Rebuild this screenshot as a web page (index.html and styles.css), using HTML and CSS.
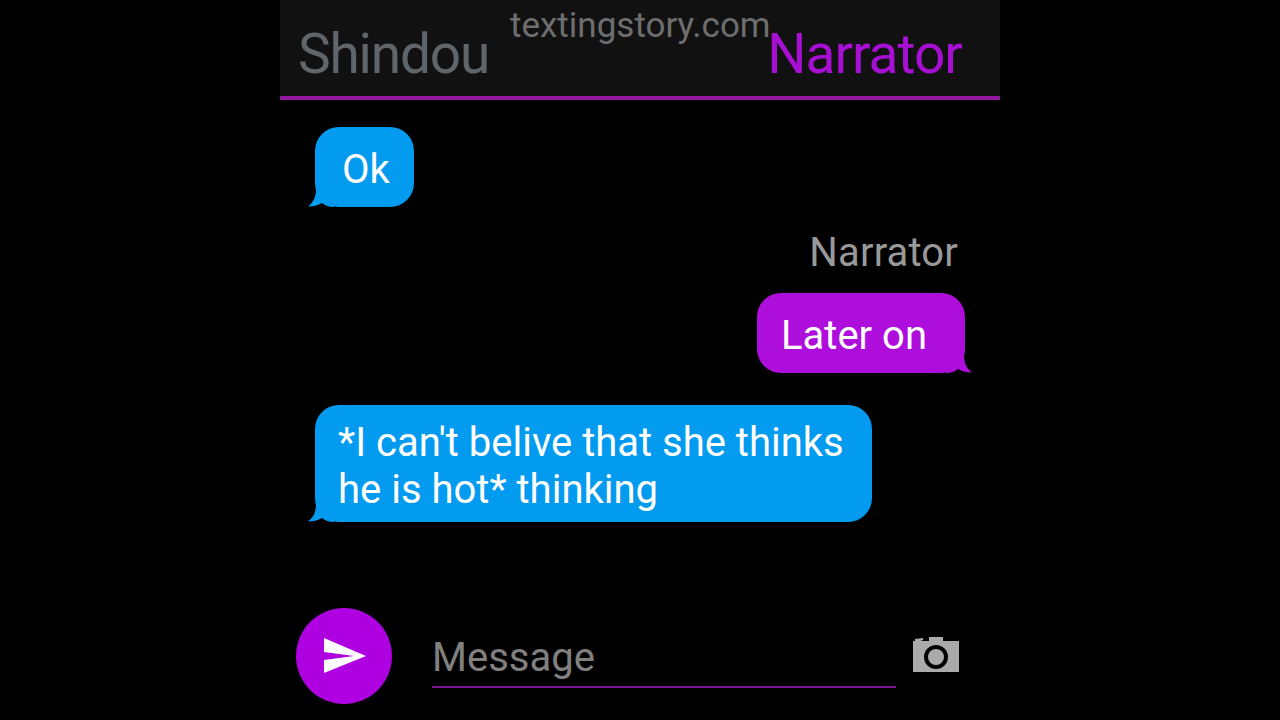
FILE: index.html
```html
<!DOCTYPE html>
<html lang="en">
<head>
    <meta charset="UTF-8">
    <meta name="viewport" content="width=device-width, initial-scale=1.0">
    <title>textingstory.com</title>
    <link rel="stylesheet" href="styles.css">
</head>
<body>
  <div class="phone">
    <div class="header">
      <span class="name-left">Shindou</span>
      <span class="name-right">Narrator</span>
      <span class="watermark">textingstory.com</span>
    </div>

    <div class="messages">
      <div class="bubble blue ok">
        Ok
        <svg class="tail tail-left" width="26" height="18" viewBox="0 0 26 18"><path d="M8 0 C8 7 6 13 0 17.500 C5 17.500 10 16.500 14 14 C17 16.500 21 18 26 18 L26 0 Z"/></svg>
      </div>

      <div class="sender">Narrator</div>
      <div class="bubble purple later">
        Later on
        <svg class="tail tail-right" width="26" height="18" viewBox="0 0 26 18"><path d="M8 0 C8 7 6 13 0 17.500 C5 17.500 10 16.500 14 14 C17 16.500 21 18 26 18 L26 0 Z"/></svg>
      </div>

      <div class="bubble blue long">
        *I can't belive that she thinks<br>he is hot* thinking
        <svg class="tail tail-left" width="26" height="18" viewBox="0 0 26 18"><path d="M8 0 C8 7 6 13 0 17.500 C5 17.500 10 16.500 14 14 C17 16.500 21 18 26 18 L26 0 Z"/></svg>
      </div>
    </div>

    <div class="footer">
      <div class="send">
        <svg width="96" height="96" viewBox="0 0 96 96"><path fill="#fff" d="M28 30 L70 48 L28 65 V52 L58 48 L28 44 Z"/></svg>
      </div>
      <div class="input">
        <span class="placeholder">Message</span>
      </div>
      <svg class="camera" width="46" height="37" viewBox="0 0 46 37">
        <path fill="#aaa" fill-rule="evenodd" d="M0 5 H16 V1 H30 V5 H46 V36 H0 Z M23 9 A12 12 0 1 0 23 33 A12 12 0 1 0 23 9 Z"/>
        <circle cx="23" cy="21" r="8" fill="#aaa"/>
        <path fill="#000" d="M0 0 H16 V5 H0 Z"/>
        <path fill="#aaa" d="M2 3 L10 2 V4 L2 7 Z"/>
      </svg>
    </div>
  </div>
</body>
</html>
```

FILE: styles.css
```css
body {
  margin: 0;
  height: 720px;
  background: black;
  font-family: "Roboto", sans-serif;
  overflow: hidden;
}

.phone {
  width: 720px;
  height: 720px;
  margin: 0 auto;
  display: flex;
  flex-direction: column;
}

.header {
  position: relative;
  box-sizing: border-box;
  height: 100px;
  padding: 25px 38px 0 18px;
  display: flex;
  justify-content: space-between;
  align-items: flex-start;
  background: #111;
  border-bottom: 4px solid #91189f;
  font-size: 55px;
  line-height: 58px;
  font-weight: 400;
  letter-spacing: -1.2px;
}

.name-left {
  color: #5f6569;
}

.name-right {
  color: #a70fd2;
  letter-spacing: -1px;
}

.watermark {
  position: absolute;
  left: 230px;
  top: 6px;
  font-size: 35px;
  line-height: 40px;
  font-weight: 400;
  letter-spacing: 0;
  color: #6e6e6e;
}

.messages {
  flex: 1;
  padding: 27px 35px 0;
  display: flex;
  flex-direction: column;
  align-items: flex-start;
}

.bubble {
  position: relative;
  box-sizing: border-box;
  font-size: 40px;
  line-height: 47px;
  color: white;
  border-radius: 24px;
}

.blue {
  background: #029bf0;
  fill: #029bf0;
}

.purple {
  background: #ae0edc;
  fill: #ae0edc;
}

.ok {
  width: 99px;
  height: 80px;
  padding: 19px 0 0 27px;
}

.later {
  align-self: flex-end;
  width: 208px;
  height: 80px;
  padding: 19px 0 0 24px;
}

.long {
  width: 557px;
  height: 117px;
  margin-top: 32px;
  padding: 14px 0 0 23px;
}

.sender {
  align-self: flex-end;
  margin: 24px 7px 19px 0;
  font-size: 40px;
  line-height: 43px;
  letter-spacing: 0.15px;
  color: #999;
}

.tail {
  position: absolute;
  bottom: 0;
}

.tail-left {
  left: -7px;
}

.tail-right {
  right: -7px;
  transform: scaleX(-1);
}

.footer {
  display: flex;
  align-items: flex-start;
  height: 112px;
  padding-left: 16px;
}

.send {
  width: 96px;
  height: 96px;
  border-radius: 50%;
  background: #ae00e0;
}

.send svg {
  display: block;
}

.input {
  box-sizing: border-box;
  width: 464px;
  height: 80px;
  margin-left: 40px;
  padding-top: 27px;
  border-bottom: 2px solid #7d1591;
}

.placeholder {
  font-size: 40px;
  line-height: 45px;
  color: #808080;
}

.camera {
  margin: 28px 0 0 17px;
}
```
